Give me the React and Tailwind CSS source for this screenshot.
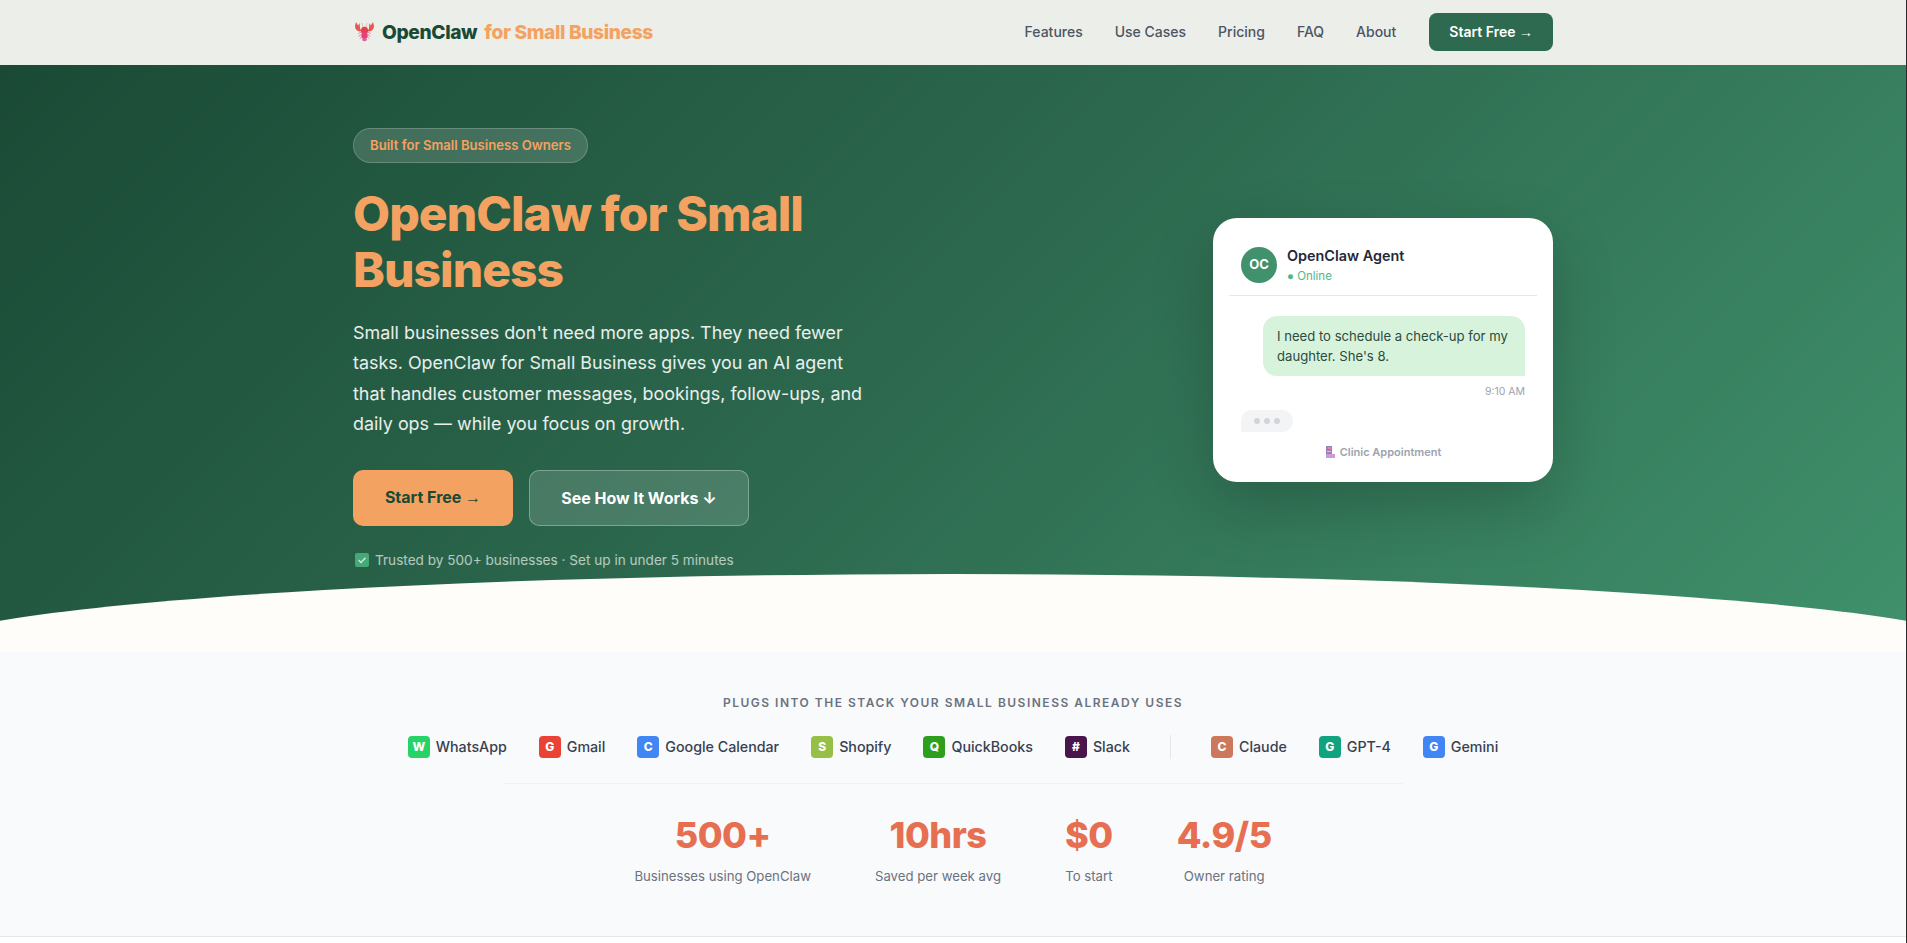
const tools = [
  { name: 'WhatsApp', letter: 'W', color: 'bg-[#25d366]' },
  { name: 'Gmail', letter: 'G', color: 'bg-[#ea4335]' },
  { name: 'Google Calendar', letter: 'C', color: 'bg-[#4285f4]' },
  { name: 'Shopify', letter: 'S', color: 'bg-[#96bf48]' },
  { name: 'QuickBooks', letter: 'Q', color: 'bg-[#2ca01c]' },
  { name: 'Slack', letter: '#', color: 'bg-[#4a154b]' },
];

const models = [
  { name: 'Claude', letter: 'C', color: 'bg-[#cc785c]' },
  { name: 'GPT-4', letter: 'G', color: 'bg-[#10a37f]' },
  { name: 'Gemini', letter: 'G', color: 'bg-[#4285f4]' },
];

const stats = [
  { value: '500+', label: 'Businesses using OpenClaw' },
  { value: '10hrs', label: 'Saved per week avg' },
  { value: '$0', label: 'To start' },
  { value: '4.9/5', label: 'Owner rating' },
];

function Lobster() {
  return (
    <svg width="19" height="20" viewBox="0 0 19 20" className="ml-[2px] shrink-0">
      {/* claws */}
      <path d="M1 0 L0 4 Q0 8 4 9.5 L6.5 9 L5 6.5 L4.6 1 L3.2 3.4 Z" fill="#e8574f" />
      <path d="M18 0 L19 4 Q19 8 15 9.5 L12.5 9 L14 6.5 L14.4 1 L15.8 3.4 Z" fill="#e8574f" />
      <path d="M7 1 L8 5 M12 1 L11 5" stroke="#f4a0a0" strokeWidth="0.7" />
      {/* body and tail */}
      <ellipse cx="9.5" cy="8.5" rx="3.6" ry="3.8" fill="#e2414f" />
      <ellipse cx="9.5" cy="13.5" rx="3.2" ry="3.6" fill="#e0447a" />
      <path d="M7 18 Q9.5 20.5 12 18 L11 16 L8 16 Z" fill="#e85a9a" />
      {/* legs */}
      <path d="M6 10 L3.4 11.6 M13 10 L15.6 11.6 M6 12.6 L3.6 14.4 M13 12.6 L15.4 14.4 M6.6 15 L4.8 16.6 M12.4 15 L14.2 16.6" stroke="#ea6c8c" strokeWidth="0.9" />
    </svg>
  );
}

function ToolItem({ item }) {
  return (
    <div className="flex items-center gap-[6px]">
      <span className={`flex h-[22px] w-[22px] items-center justify-center rounded-[4px] text-xs font-extrabold text-white ${item.color}`}>
        {item.letter}
      </span>
      <span className="text-[14.24px] font-medium text-[#374151]">{item.name}</span>
    </div>
  );
}

function Arrow() {
  return <span className="font-['Liberation_Sans',sans-serif] font-normal">→</span>;
}

export default function App() {
  return (
    <div className="flex min-h-[943px] bg-white font-['Inter',sans-serif]">
      <div className="w-[1906px]">
        {/* Nav */}
        <nav className="bg-[#eceee9]">
          <div className="mx-auto flex h-[65px] w-[1200px] items-center justify-between pb-px">
            <div className="flex items-center text-[19.2px] font-extrabold tracking-[-0.384px]">
              <Lobster />
              <span className="ml-[8px] text-[#1a4a35]">OpenClaw</span>
              <span className="ml-[7px] text-[#f4a261]">for Small Business</span>
            </div>
            <div className="flex items-center gap-8">
              {['Features', 'Use Cases', 'Pricing', 'FAQ', 'About'].map((link) => (
                <a key={link} className="text-sm font-medium text-[#4b5563]">{link}</a>
              ))}
              <a className="ml-px rounded-lg bg-[#2d6a4f] px-5 py-[9px] text-sm font-semibold text-white">Start Free <Arrow /></a>
            </div>
          </div>
        </nav>

        {/* Hero */}
        <section className="relative h-[587px] overflow-hidden bg-[linear-gradient(135deg,#1a4a35_0%,#2d6a4f_50%,#40916c_100%)]">
          <div className="mx-auto grid w-[1200px] grid-cols-2 gap-16 pt-[63px]">
            <div>
              <div className="inline-block rounded-full border border-white/20 bg-white/15 px-4 py-[8px] text-[13.12px] font-semibold leading-[17px] text-[#f4a261]">
                Built for Small Business Owners
              </div>
              <h1 className="mt-[23px] text-[48px] font-extrabold leading-[56px] tracking-[-0.96px] text-[#f4a261]">
                OpenClaw for Small Business
              </h1>
              <p className="mt-5 w-[520px] text-[17.92px] leading-[30.46px] text-white/90">
                Small businesses don't need more apps. They need fewer tasks. OpenClaw for Small Business gives you an AI agent that handles customer messages, bookings, follow-ups, and daily ops — while you focus on growth.
              </p>
              <div className="mt-[30px] flex gap-4">
                <a className="flex w-[160px] items-center justify-center rounded-[10px] bg-[#f4a261] text-base font-bold text-[#1a4a35]">
                  <span>Start Free <Arrow /></span>
                </a>
                <a className="flex w-[220px] items-center justify-center rounded-[10px] border border-white/30 bg-white/15 py-[15px] text-base font-bold leading-6 text-white">See How It Works ↓</a>
              </div>
              <div className="mt-6 flex items-center gap-[6px] pl-[2px] text-[13.6px] text-white/65">
                <span className="flex h-[14px] w-[14px] items-center justify-center rounded-[2px] bg-[#45a877]">
                  <svg width="10" height="10" viewBox="0 0 10 10" fill="none" stroke="#d8e8dc" strokeWidth="1.4"><path d="M1.5 5 L4 7.4 L8.5 2.8" /></svg>
                </span>
                Trusted by 500+ businesses · Set up in under 5 minutes
              </div>
            </div>
            <div className="flex justify-end pt-[90px]">
              <div className="h-[264px] w-[340px] rounded-3xl bg-white px-4 pt-7 shadow-[0_24px_64px_rgba(0,0,0,0.2)]">
                <div className="flex items-center gap-[10px] border-b border-[#e5e7eb] px-[12px] pb-[11px]">
                  <div className="flex h-9 w-9 items-center justify-center rounded-full bg-[#40916c] text-[13px] font-bold text-white">OC</div>
                  <div>
                    <div className="text-[14.4px] font-semibold leading-5 text-[#1f2937]">OpenClaw Agent</div>
                    <div className="mt-[2px] text-[11.5px] leading-4 text-[#52b788]"><span className="font-['Liberation_Sans',sans-serif]">●</span> Online</div>
                  </div>
                </div>
                <div className="mt-[20px] flex justify-end px-[12px]">
                  <div className="w-[262px] rounded-[14px] rounded-br-none bg-[#d8f3dc] px-[14px] py-[10px] text-[13.12px] leading-[20px] text-[#2d4a3e]">
                    I need to schedule a check-up for my daughter. She's 8.
                  </div>
                </div>
                <div className="mt-[9px] px-[12px] text-right text-[10.5px] leading-[14px] text-[#9ca3af]">9:10 AM</div>
                <div className="ml-[12px] mt-[11px] flex h-[22px] w-[52px] items-center justify-center gap-[4px] rounded-[12px] rounded-bl-none bg-[#f3f4f6]">
                  <span className="h-[6px] w-[6px] rounded-full bg-[#d1d5db]" />
                  <span className="h-[6px] w-[6px] rounded-full bg-[#d1d5db]" />
                  <span className="h-[6px] w-[6px] rounded-full bg-[#d1d5db]" />
                </div>
                <div className="mt-[12px] flex items-center justify-center gap-[5px] text-[11px] font-semibold leading-4 text-[#9ca3af]">
                  <svg width="10" height="12" viewBox="0 0 10 12"><rect x="1" y="0" width="6" height="12" fill="#9c7fb8" /><rect x="1" y="8" width="9" height="4" fill="#c99bd8" /><rect x="3" y="1" width="3" height="2" fill="#e87fa8" /><rect x="2" y="5" width="4" height="1" fill="#d9c6e6" /></svg>
                  Clinic Appointment
                </div>
              </div>
            </div>
          </div>
          <div className="absolute -left-[5%] bottom-[-2px] h-20 w-[110%] rounded-[50%_50%_0_0/100%_100%_0_0] bg-[#fefdf9]" />
        </section>

        {/* Integrations */}
        <section className="h-[285px] border-b border-[#e5e7eb] bg-[#f9fafb] pt-[43px]">
          <p className="text-center text-xs font-semibold leading-4 tracking-[1.5px] text-[#6b7280]">PLUGS INTO THE STACK YOUR SMALL BUSINESS ALREADY USES</p>
          <div className="mt-6 flex items-center justify-center gap-8">
            {tools.map((item) => <ToolItem key={item.name} item={item} />)}
            <div className="mx-2 h-6 w-px bg-[#e5e7eb]" />
            {models.map((item) => <ToolItem key={item.name} item={item} />)}
          </div>
          <div className="mx-auto mt-[24px] w-[900px] border-t border-[#eff0f3]" />
          <div className="mt-[31px] flex justify-center gap-16">
            {stats.map((stat) => (
              <div key={stat.value} className="text-center">
                <div className="text-[36px] font-extrabold leading-10 tracking-[-0.5px] text-[#e76f51]">{stat.value}</div>
                <div className="mt-[11px] text-[13.2px] leading-5 text-[#6b7280]">{stat.label}</div>
              </div>
            ))}
          </div>
        </section>
      </div>
      <div className="w-px bg-[#2a2a2a]" />
    </div>
  );
}
